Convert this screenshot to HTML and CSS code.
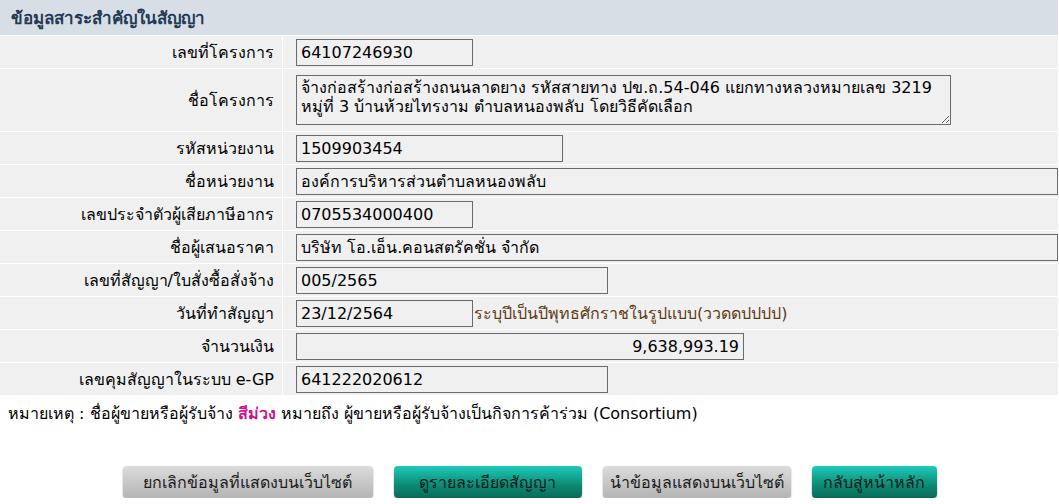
FILE: index.html
```html
<!doctype html>
<html lang="th">
<head>
    <meta charset="utf-8">
    <title>ข้อมูลสาระสำคัญในสัญญา</title>
    <link rel="stylesheet" href="styles.css">
</head>
<body>
<table class="contract">
    <thead>
        <tr>
            <th colspan="2">ข้อมูลสาระสำคัญในสัญญา</th>
        </tr>
    </thead>
    <tbody>
        <tr>
            <td class="label">เลขที่โครงการ</td>
            <td><input type="text" class="w-s" value="64107246930" readonly></td>
        </tr>
        <tr class="tall">
            <td class="label">ชื่อโครงการ</td>
            <td><textarea class="w-area" readonly>จ้างก่อสร้างก่อสร้างถนนลาดยาง รหัสสายทาง ปข.ถ.54-046 แยกทางหลวงหมายเลข 3219 หมู่ที่ 3 บ้านห้วยไทรงาม ตำบลหนองพลับ โดยวิธีคัดเลือก</textarea></td>
        </tr>
        <tr>
            <td class="label">รหัสหน่วยงาน</td>
            <td><input type="text" class="w-m" value="1509903454" readonly></td>
        </tr>
        <tr>
            <td class="label">ชื่อหน่วยงาน</td>
            <td><input type="text" class="w-full" value="องค์การบริหารส่วนตำบลหนองพลับ" readonly></td>
        </tr>
        <tr>
            <td class="label">เลขประจำตัวผู้เสียภาษีอากร</td>
            <td><input type="text" class="w-s" value="0705534000400" readonly></td>
        </tr>
        <tr>
            <td class="label">ชื่อผู้เสนอราคา</td>
            <td><input type="text" class="w-full" value="บริษัท โอ.เอ็น.คอนสตรัคชั่น จำกัด" readonly></td>
        </tr>
        <tr>
            <td class="label">เลขที่สัญญา/ใบสั่งซื้อสั่งจ้าง</td>
            <td><input type="text" class="w-l" value="005/2565" readonly></td>
        </tr>
        <tr>
            <td class="label">วันที่ทำสัญญา</td>
            <td><input type="text" class="w-s" value="23/12/2564" readonly><span class="hint">ระบุปีเป็นปีพุทธศักราชในรูปแบบ(ววดดปปปป)</span></td>
        </tr>
        <tr>
            <td class="label">จำนวนเงิน</td>
            <td><input type="text" class="w-xl money" value="9,638,993.19" readonly></td>
        </tr>
        <tr>
            <td class="label">เลขคุมสัญญาในระบบ e-GP</td>
            <td><input type="text" class="w-l" value="641222020612" readonly></td>
        </tr>
    </tbody>
</table>

<p class="note">หมายเหตุ : ชื่อผู้ขายหรือผู้รับจ้าง <b class="purple">สีม่วง</b> หมายถึง ผู้ขายหรือผู้รับจ้างเป็นกิจการค้าร่วม (Consortium)</p>

<div class="buttons">
    <button class="btn btn-gray btn-cancel">ยกเลิกข้อมูลที่แสดงบนเว็บไซต์</button>
    <button class="btn btn-teal btn-detail">ดูรายละเอียดสัญญา</button>
    <button class="btn btn-gray btn-show">นำข้อมูลแสดงบนเว็บไซต์</button>
    <button class="btn btn-teal btn-home">กลับสู่หน้าหลัก</button>
</div>
</body>
</html>
```

FILE: styles.css
```css
body {
    margin: 0;
    font-family: "DejaVu Sans", sans-serif;
    font-size: 16px;
    color: #000;
    background: #fff;
}

.contract {
    width: 1060px;
    margin: -1px 0 0 -1px;
    border-collapse: separate;
    border-spacing: 1px;
    background: #fff;
}
.contract th {
    height: 35px;
    padding: 0 0 0 11px;
    text-align: left;
    font-size: 17px;
    font-weight: bold;
    color: #233a55;
    background-color: #d7dee6;
}
.contract td {
    height: 32px;
    padding: 0;
    background-color: #f0f0f0;
}
.contract td.label {
    width: 274px;
    padding-right: 8px;
    text-align: right;
}
.contract td + td {
    padding-left: 13px;
}
.contract tr.tall td {
    height: 62px;
}

.contract input,
.contract textarea {
    box-sizing: border-box;
    height: 27px;
    margin: 0;
    padding: 1px 4px 0;
    border: 1px solid #6a6a6a;
    background: #f0f0f0;
    font: inherit;
    color: #000;
    vertical-align: middle;
}
.contract textarea {
    display: block;
    height: 50px;
    padding: 2px 4px;
    line-height: 19px;
    resize: both;
}

.w-s { width: 177px; }
.w-m { width: 267px; }
.w-l { width: 312px; }
.w-xl { width: 448px; }
.w-full { width: 762px; }
.w-area { width: 655px; }
.money { text-align: right; }

.hint {
    vertical-align: middle;
    margin-left: 1px;
    color: #5e3a14;
}

.note {
    margin: 5px 0 0 8px;
}
.purple {
    color: #c8148c;
}

.buttons {
    display: flex;
    justify-content: center;
    gap: 21px;
    margin-top: 40px;
}
.btn {
    height: 32px;
    padding: 0;
    border: 0;
    border-radius: 4px;
    font: inherit;
    white-space: nowrap;
    color: #1a1a1a;
    box-shadow: 0 1px 2px rgba(0, 0, 0, 0.35);
}
.btn-gray {
    background: linear-gradient(#dcdcdc, #b4b4b4);
}
.btn-teal {
    background: linear-gradient(#1ecbbb, #0c8a73 60%, #086b58);
}
.btn-cancel { width: 250px; }
.btn-detail { width: 188px; }
.btn-show { width: 188px; }
.btn-home { width: 125px; }
```
